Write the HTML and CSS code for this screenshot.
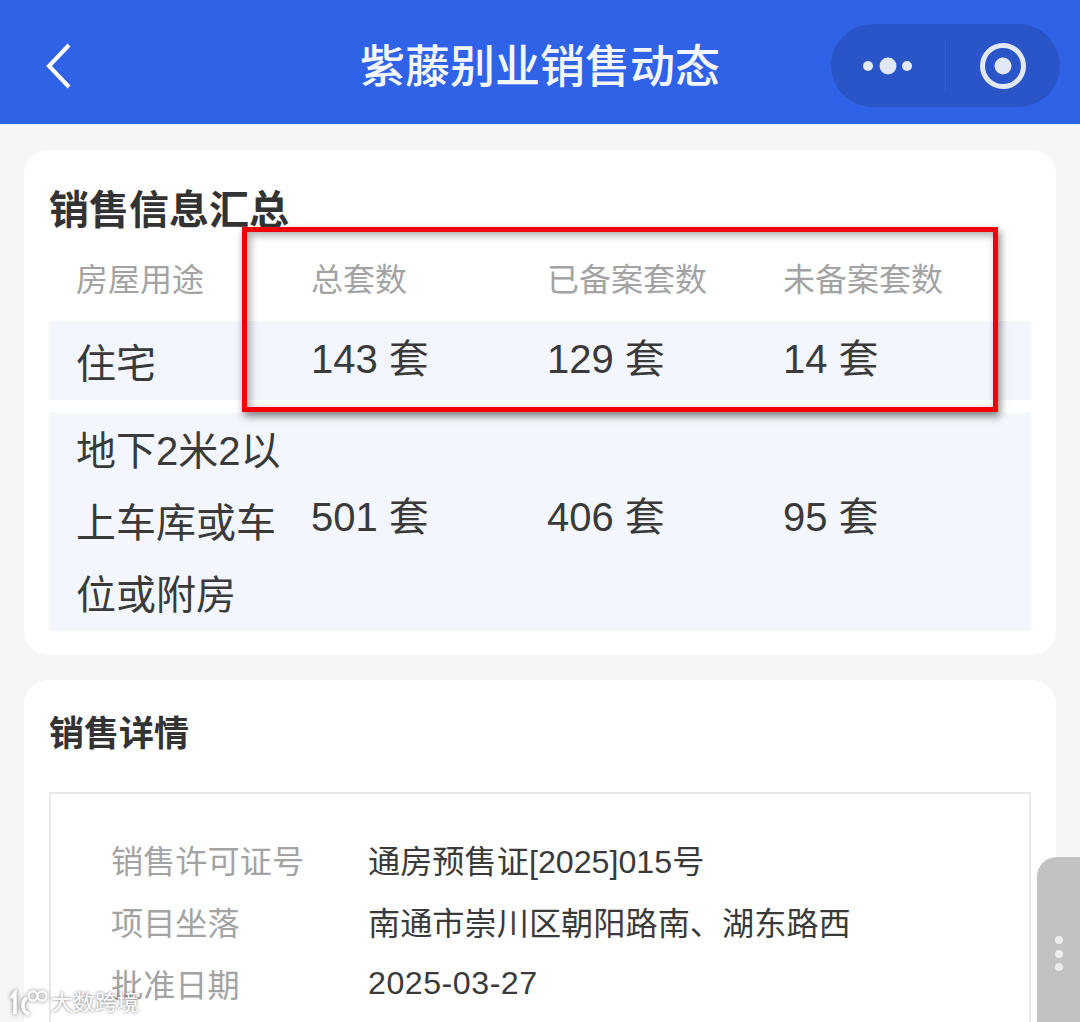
FILE: index.html
```html
<!DOCTYPE html>
<html lang="zh-CN">

<head>
    <meta charset="utf-8" />
    <title>紫藤别业销售动态</title>
    <link rel="stylesheet" href="styles.css">
</head>

<body>
    <header class="topbar">
        <svg class="back-icon" width="26" height="46" viewBox="0 0 26 46">
            <path d="M23 2 L3 23 L23 44" fill="none" stroke="#fff" stroke-width="4" />
        </svg>
        <h1 class="topbar-title">紫藤别业销售动态</h1>
        <div class="capsule">
            <div class="capsule-part">
                <svg width="52" height="20" viewBox="0 0 52 20">
                    <circle cx="6" cy="10" r="5" fill="#e3e8f6" />
                    <circle cx="26" cy="10" r="8.5" fill="#e3e8f6" />
                    <circle cx="45" cy="10" r="5" fill="#e3e8f6" />
                </svg>
            </div>
            <div class="capsule-line"></div>
            <div class="capsule-part">
                <svg width="48" height="48" viewBox="0 0 48 48">
                    <circle cx="24" cy="24" r="20.5" fill="none" stroke="#e3e8f6" stroke-width="5" />
                    <circle cx="24" cy="24" r="8.5" fill="#e3e8f6" />
                </svg>
            </div>
        </div>
    </header>

    <main class="content">
        <section class="card card-summary">
            <h2 class="summary-title">销售信息汇总</h2>
            <div class="sale-row head-row">
                <div>房屋用途</div>
                <div>总套数</div>
                <div>已备案套数</div>
                <div>未备案套数</div>
            </div>
            <div class="sale-row data-row data-row-short">
                <div class="row-name">住宅</div>
                <div class="row-num">143 套</div>
                <div class="row-num">129 套</div>
                <div class="row-num">14 套</div>
            </div>
            <div class="sale-row data-row data-row-tall">
                <div class="row-name">地下2米2以上车库或车位或附房</div>
                <div class="row-num">501 套</div>
                <div class="row-num">406 套</div>
                <div class="row-num">95 套</div>
            </div>
        </section>

        <section class="card card-detail">
            <h2 class="detail-title">销售详情</h2>
            <div class="detail-box">
                <div class="detail-row"><span class="detail-label">销售许可证号</span><span>通房预售证[2025]015号</span></div>
                <div class="detail-row"><span class="detail-label">项目坐落</span><span>南通市崇川区朝阳路南、湖东路西</span></div>
                <div class="detail-row"><span class="detail-label">批准日期</span><span class="detail-date">2025-03-27</span></div>
            </div>
        </section>
    </main>

    <div class="highlight-box"></div>

    <div class="side-tab">
        <span></span>
        <span></span>
        <span></span>
    </div>

    <div class="watermark">
        <svg width="40" height="26" viewBox="0 0 40 26">
            <path d="M2 8 L6 3 V24" fill="none" stroke="#fff" stroke-width="3.5" />
            <path d="M18 8 A9 9 0 0 0 20 24" fill="none" stroke="#fff" stroke-width="3.5" />
            <circle cx="24" cy="6" r="4.5" fill="none" stroke="#fff" stroke-width="2" />
            <circle cx="33" cy="6" r="4.5" fill="none" stroke="#fff" stroke-width="2" />
        </svg>
        <span>大数跨境</span>
    </div>
</body>

</html>
```

FILE: styles.css
```css
html,
body {
    height: 1022px;
    overflow: hidden;
}

body {
    position: relative;
    margin: 0;
    background-color: #f6f6f6;
    color: #333;
    font-family: "Liberation Sans", "Noto Sans CJK SC", sans-serif;
}

.topbar {
    position: relative;
    display: flex;
    align-items: center;
    justify-content: center;
    height: 124px;
    background-color: #3062e8;
}

.back-icon {
    position: absolute;
    left: 46px;
    top: 43px;
}

.topbar-title {
    margin: 0;
    padding-top: 12px;
    color: #f4f6fd;
    font-size: 45px;
    font-weight: 500;
    line-height: 60px;
}

.capsule {
    position: absolute;
    left: 831px;
    top: 24px;
    display: flex;
    align-items: center;
    width: 229px;
    height: 83px;
    border-radius: 42px;
    background-color: #2a55c8;
}

.capsule-part {
    display: flex;
    flex: 1;
    align-items: center;
    justify-content: center;
}

.capsule-line {
    width: 1px;
    height: 54px;
    background-color: #3560d0;
}

.content {
    display: flex;
    flex-direction: column;
    gap: 25px;
    box-sizing: border-box;
    height: 898px;
    padding: 26px 24px 0;
    overflow: hidden;
}

.card {
    flex-shrink: 0;
    border-radius: 24px;
    background-color: #fff;
    padding: 0 25px;
}

.card-summary {
    height: 505px;
    box-sizing: border-box;
    padding-top: 32px;
}

.summary-title {
    margin: 0;
    font-size: 40px;
    font-weight: 700;
    line-height: 56px;
    color: #333;
}

.sale-row {
    display: grid;
    grid-template-columns: 235px 236px 236px 1fr;
    align-items: center;
    padding-left: 27px;
}

.head-row {
    box-sizing: border-box;
    height: 83px;
    padding-bottom: 6px;
    color: #a3a3a3;
    font-size: 32px;
}

.data-row {
    margin-bottom: 13px;
    background-color: #f3f6fd;
    color: #3a3a3a;
    font-size: 40px;
}

.row-name {
    width: 205px;
    padding-top: 2px;
    line-height: 72px;
}

.data-row-short {
    height: 79px;
}

.data-row-short .row-name {
    padding-top: 7px;
}

.data-row-short .row-num {
    padding-bottom: 10px;
}

.data-row-tall .row-num {
    padding-bottom: 16px;
}

.card-detail {
    height: 400px;
    padding-top: 28px;
}

.detail-title {
    margin: 0 0 32px;
    font-size: 35px;
    font-weight: 700;
    line-height: 52px;
    color: #333;
}

.detail-box {
    box-sizing: border-box;
    height: 300px;
    padding: 34px 60px 0;
    border: 2px solid #e8e8e8;
    background-color: #fff;
}

.detail-row {
    display: flex;
    height: 62px;
    align-items: center;
    color: #3a3a3a;
    font-size: 32.2px;
}

.detail-label {
    width: 257px;
    color: #a3a3a3;
}

.detail-date {
    letter-spacing: 0.5px;
}

/* red marker drawn over the screenshot */
.highlight-box {
    position: absolute;
    left: 242px;
    top: 227px;
    box-sizing: border-box;
    width: 756px;
    height: 185px;
    border: 5.5px solid #f50000;
    box-shadow: 2px 4px 8px rgba(0, 0, 0, 0.5), inset 3px 3px 8px rgba(0, 0, 0, 0.35);
}

.side-tab {
    position: absolute;
    right: 0;
    top: 857px;
    display: flex;
    flex-direction: column;
    align-items: center;
    gap: 5.5px;
    box-sizing: border-box;
    width: 43px;
    height: 165px;
    padding-top: 79px;
    border-radius: 20px 0 0 0;
    background-color: #c2c2c2;
}

.side-tab span {
    width: 8px;
    height: 8px;
    border-radius: 50%;
    background-color: #ececec;
}

.watermark {
    position: absolute;
    left: 9px;
    top: 988px;
    display: flex;
    align-items: center;
    gap: 2px;
    color: #fff;
    font-size: 22px;
    line-height: 30px;
    text-shadow: 0 0 3px rgba(0, 0, 0, 0.6);
}

.watermark svg {
    filter: drop-shadow(0 0 2px rgba(0, 0, 0, 0.55));
}
```
